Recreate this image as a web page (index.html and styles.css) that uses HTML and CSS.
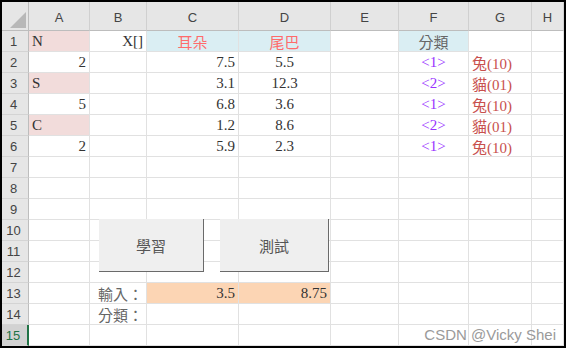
FILE: index.html
```html
<!DOCTYPE html>
<html lang="zh-Hant">
<head>
    <meta charset="UTF-8">
    <title>分類 學習</title>
    <link rel="stylesheet" href="styles.css">
</head>
<body>
    <div class="sheet">
        <!-- 欄標題 -->
        <div class="row head">
            <div class="corner"><span class="tri"></span></div>
            <div class="h">A</div><div class="h">B</div><div class="h">C</div><div class="h">D</div>
            <div class="h">E</div><div class="h">F</div><div class="h">G</div><div class="h">H</div>
        </div>

        <div class="row">
            <div class="rh">1</div>
            <div class="c pink">N</div>
            <div class="c r">X[]</div>
            <div class="c m blue red">耳朵</div>
            <div class="c m blue red">尾巴</div>
            <div class="c"></div>
            <div class="c m blue cjk">分類</div>
            <div class="c"></div><div class="c"></div>
        </div>
        <div class="row">
            <div class="rh">2</div>
            <div class="c r">2</div>
            <div class="c"></div>
            <div class="c r">7.5</div>
            <div class="c m">5.5</div>
            <div class="c"></div>
            <div class="c m purple">&lt;1&gt;</div>
            <div class="c brick">兔(10)</div><div class="c"></div>
        </div>
        <div class="row">
            <div class="rh">3</div>
            <div class="c pink">S</div>
            <div class="c"></div>
            <div class="c r">3.1</div>
            <div class="c m">12.3</div>
            <div class="c"></div>
            <div class="c m purple">&lt;2&gt;</div>
            <div class="c brick">貓(01)</div><div class="c"></div>
        </div>
        <div class="row">
            <div class="rh">4</div>
            <div class="c r">5</div>
            <div class="c"></div>
            <div class="c r">6.8</div>
            <div class="c m">3.6</div>
            <div class="c"></div>
            <div class="c m purple">&lt;1&gt;</div>
            <div class="c brick">兔(10)</div><div class="c"></div>
        </div>
        <div class="row">
            <div class="rh">5</div>
            <div class="c pink">C</div>
            <div class="c"></div>
            <div class="c r">1.2</div>
            <div class="c m">8.6</div>
            <div class="c"></div>
            <div class="c m purple">&lt;2&gt;</div>
            <div class="c brick">貓(01)</div><div class="c"></div>
        </div>
        <div class="row">
            <div class="rh">6</div>
            <div class="c r">2</div>
            <div class="c"></div>
            <div class="c r">5.9</div>
            <div class="c m">2.3</div>
            <div class="c"></div>
            <div class="c m purple">&lt;1&gt;</div>
            <div class="c brick">兔(10)</div><div class="c"></div>
        </div>
        <div class="row">
            <div class="rh">7</div>
            <div class="c"></div><div class="c"></div><div class="c"></div><div class="c"></div>
            <div class="c"></div><div class="c"></div><div class="c"></div><div class="c"></div>
        </div>
        <div class="row">
            <div class="rh">8</div>
            <div class="c"></div><div class="c"></div><div class="c"></div><div class="c"></div>
            <div class="c"></div><div class="c"></div><div class="c"></div><div class="c"></div>
        </div>
        <div class="row">
            <div class="rh">9</div>
            <div class="c"></div><div class="c"></div><div class="c"></div><div class="c"></div>
            <div class="c"></div><div class="c"></div><div class="c"></div><div class="c"></div>
        </div>
        <div class="row">
            <div class="rh">10</div>
            <div class="c"></div><div class="c"></div><div class="c"></div><div class="c"></div>
            <div class="c"></div><div class="c"></div><div class="c"></div><div class="c"></div>
        </div>
        <div class="row">
            <div class="rh">11</div>
            <div class="c"></div><div class="c"></div><div class="c"></div><div class="c"></div>
            <div class="c"></div><div class="c"></div><div class="c"></div><div class="c"></div>
        </div>
        <div class="row">
            <div class="rh">12</div>
            <div class="c"></div><div class="c"></div><div class="c"></div><div class="c"></div>
            <div class="c"></div><div class="c"></div><div class="c"></div><div class="c"></div>
        </div>
        <div class="row">
            <div class="rh">13</div>
            <div class="c"></div>
            <div class="c r cjk">輸入：</div>
            <div class="c r orange">3.5</div>
            <div class="c r orange">8.75</div>
            <div class="c"></div><div class="c"></div><div class="c"></div><div class="c"></div>
        </div>
        <div class="row">
            <div class="rh">14</div>
            <div class="c"></div>
            <div class="c r cjk">分類：</div>
            <div class="c"></div><div class="c"></div>
            <div class="c"></div><div class="c"></div><div class="c"></div><div class="c"></div>
        </div>
        <div class="row">
            <div class="rh active">15</div>
            <div class="c"></div><div class="c"></div><div class="c"></div><div class="c"></div>
            <div class="c"></div><div class="c"></div><div class="c"></div><div class="c"></div>
        </div>

        <!-- 按鈕 -->
        <button class="btn btn-learn">學習</button>
        <button class="btn btn-test">測試</button>

        <div class="mark">CSDN @Vicky Shei</div>
    </div>
</body>
</html>
```

FILE: styles.css
```css
body {
    margin: 0;
    background: #fff;
}
.sheet {
    position: relative;
    width: 566px;
    height: 348px;
    box-sizing: border-box;
    border: 2px solid #000;
    overflow: hidden;
    font-family: "Liberation Serif", "Noto Sans CJK TC", serif;
    font-size: 15px;
    color: #333;
}
.row {
    display: grid;
    grid-template-columns: 27px 61px 57px 92px 92px 68px 70px 63px 32px;
    height: 21px;
}
.row.head {
    height: 29px;
}
.c, .rh, .h, .corner {
    box-sizing: border-box;
    display: flex;
    align-items: center;
    overflow: hidden;
    white-space: nowrap;
}
.c {
    padding: 1px 3px 0;
    border-right: 1px solid #e1e1e1;
    border-bottom: 1px solid #e1e1e1;
}
.c.r { justify-content: flex-end; }
.c.m { justify-content: center; }
.cjk { color: #666; }
.pink { background: #f2dcdb; }
.blue { background: #daeef3; }
.orange { background: #fcd5b4; }
.red { color: #ff6b6b; }
.purple { color: #9933ff; }
.brick { color: #c8504d; }

.h, .rh, .corner {
    font-family: "Liberation Sans", "DejaVu Sans", sans-serif;
    font-size: 13px;
    color: #444;
    background: #e6e6e6;
}
.h {
    justify-content: center;
    padding-top: 3px;
    border-right: 1px solid #d0d0d0;
    border-bottom: 1px solid #bdbdbd;
}
.corner {
    position: relative;
    border-right: 1px solid #bdbdbd;
    border-bottom: 1px solid #bdbdbd;
}
.tri {
    position: absolute;
    right: 2px;
    bottom: 2px;
    width: 0;
    height: 0;
    border-left: 16px solid transparent;
    border-bottom: 16px solid #b8b8b8;
}
.rh {
    justify-content: center;
    padding-right: 3px;
    border-right: 1px solid #bdbdbd;
    border-bottom: 1px solid #d4d4d4;
}
.rh.active {
    background: #d2d2d2;
    color: #217346;
    border-right: 2px solid #217346;
}

.btn {
    position: absolute;
    top: 217px;
    height: 53px;
    box-sizing: border-box;
    background: #efefef;
    border: none;
    border-right: 1px solid #6a6a6a;
    border-bottom: 1px solid #6a6a6a;
    font-family: "Noto Sans CJK TC", sans-serif;
    font-size: 15px;
    color: #555;
    padding: 0;
}
.btn-learn {
    left: 97px;
    width: 105px;
}
.btn-test {
    left: 218px;
    width: 109px;
}
.mark {
    position: absolute;
    right: 8px;
    bottom: 3px;
    font-family: "Liberation Sans", sans-serif;
    font-size: 15px;
    color: #9a9a9a;
}
```
